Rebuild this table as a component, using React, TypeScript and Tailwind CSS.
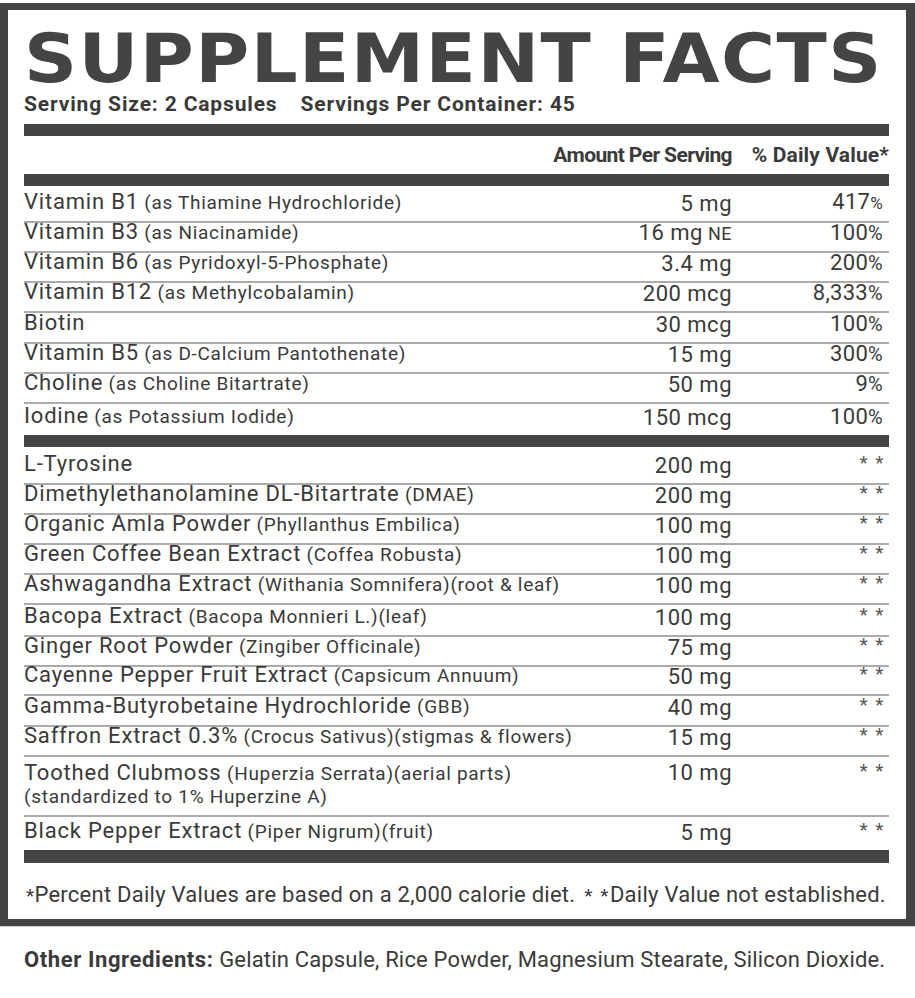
import React from "react";

type Row = {
  name: string;
  sub?: string;
  sub2?: string;
  amt: string;
  amtSuffix?: string;
  dv?: string;
  pctSmall?: boolean;
  h: string;
  shift?: "s1" | "s3" | "s6" | "s10";
  last?: boolean;
};

const vitamins: Row[] = [
  { name: "Vitamin B1", sub: "(as Thiamine Hydrochloride)", amt: "5 mg", dv: "417", pctSmall: true, h: "h-[37px]" },
  { name: "Vitamin B3", sub: "(as Niacinamide)", amt: "16 mg", amtSuffix: "NE", dv: "100", h: "h-[30px]" },
  { name: "Vitamin B6", sub: "(as Pyridoxyl-5-Phosphate)", amt: "3.4 mg", dv: "200", h: "h-[30px]" },
  { name: "Vitamin B12", sub: "(as Methylcobalamin)", amt: "200 mcg", dv: "8,333", h: "h-[30px]" },
  { name: "Biotin", amt: "30 mcg", dv: "100", h: "h-[31px]" },
  { name: "Vitamin B5", sub: "(as D-Calcium Pantothenate)", amt: "15 mg", dv: "300", h: "h-[30px]" },
  { name: "Choline", sub: "(as Choline Bitartrate)", amt: "50 mg", dv: "9", h: "h-[30px]" },
  { name: "Iodine", sub: "(as Potassium Iodide)", amt: "150 mcg", dv: "100", h: "h-[31px]", last: true },
];

const others: Row[] = [
  { name: "L-Tyrosine", amt: "200 mg", h: "h-[38px]" },
  { name: "Dimethylethanolamine DL-Bitartrate", sub: "(DMAE)", amt: "200 mg", h: "h-[30px]" },
  { name: "Organic Amla Powder", sub: "(Phyllanthus Embilica)", amt: "100 mg", h: "h-[30px]" },
  { name: "Green Coffee Bean Extract", sub: "(Coffea Robusta)", amt: "100 mg", h: "h-[30px]" },
  { name: "Ashwagandha Extract", sub: "(Withania Somnifera)(root & leaf)", amt: "100 mg", h: "h-[30px]", shift: "s6" },
  { name: "Bacopa Extract", sub: "(Bacopa Monnieri L.)(leaf)", amt: "100 mg", h: "h-[32px]" },
  { name: "Ginger Root Powder", sub: "(Zingiber Officinale)", amt: "75 mg", h: "h-[30px]", shift: "s6" },
  { name: "Cayenne Pepper Fruit Extract", sub: "(Capsicum Annuum)", amt: "50 mg", h: "h-[29px]", shift: "s10" },
  { name: "Gamma-Butyrobetaine Hydrochloride", sub: "(GBB)", amt: "40 mg", h: "h-[31px]", shift: "s1" },
  { name: "Saffron Extract 0.3%", sub: "(Crocus Sativus)(stigmas & flowers)", amt: "15 mg", h: "h-[30px]", shift: "s10" },
  { name: "Toothed Clubmoss", sub: "(Huperzia Serrata)(aerial parts)", sub2: "(standardized to 1% Huperzine A)", amt: "10 mg", h: "h-[60px]", shift: "s3" },
  { name: "Black Pepper Extract", sub: "(Piper Nigrum)(fruit)", amt: "5 mg", h: "h-[33px]", last: true },
];

const amtShift: Record<string, string> = {
  s1: "mr-[-1px]",
  s3: "mr-[-3px]",
  s6: "mr-[-6px]",
  s10: "mr-[-10px]",
};
const dvShift: Record<string, string> = {
  s1: "ml-[1px]",
  s3: "ml-[3px]",
  s6: "ml-[6px]",
  s10: "ml-[10px]",
};

function Stars() {
  return <span className="relative top-[-3px] text-[19px] tracking-[1.5px] text-[#555]">* *</span>;
}

function IngredientRow({ r }: { r: Row }) {
  const border = r.last ? "" : "border-b-2 border-[#ababab]";
  const aS = r.shift ? amtShift[r.shift] : "";
  const dS = r.shift ? dvShift[r.shift] : "";
  if (r.sub2) {
    return (
      <div className={`flex items-start pt-[5px] ${r.h} ${border}`}>
        <div className="flex-1 leading-[21px] whitespace-nowrap">
          <div>
            <span className="text-[22px] tracking-[0.8px]">{r.name}</span>
            <span className="text-[19px] tracking-[0.7px]"> {r.sub}</span>
          </div>
          <div className="text-[19px] tracking-[0.7px] leading-[16px] mt-[4px]">{r.sub2}</div>
        </div>
        <div className={`shrink-0 text-right text-[22px] leading-[21px] tracking-[0.5px] ${aS}`}>{r.amt}</div>
        <div className={`w-[157px] shrink-0 text-right pr-[4px] text-[22px] leading-[21px] ${dS}`}>
          <Stars />
        </div>
      </div>
    );
  }
  return (
    <div className={`flex items-end pb-[7px] ${r.h} ${border}`}>
      <div className="flex-1 leading-[21px] whitespace-nowrap">
        <span className="text-[22px] tracking-[0.8px]">{r.name}</span>
        {r.sub ? <span className="text-[19px] tracking-[0.7px]"> {r.sub}</span> : null}
      </div>
      <div className={`shrink-0 text-right text-[22px] leading-[21px] tracking-[0.5px] ${aS}`}>
        {r.amt}
        {r.amtSuffix ? <span className="text-[18px] tracking-[0.5px]"> {r.amtSuffix}</span> : null}
      </div>
      <div className={`w-[157px] shrink-0 text-right ${r.dv ? "pr-[6px]" : "pr-[4px]"} text-[22px] leading-[21px] tracking-[0.3px] ${dS}`}>
        {r.dv ? (
          <>
            {r.dv}
            <span className={r.pctSmall ? "text-[17px]" : "text-[20px]"}>%</span>
          </>
        ) : (
          <Stars />
        )}
      </div>
    </div>
  );
}

export default function App() {
  return (
    <div className="w-[915px] min-h-[998px] bg-white pt-[3px] text-[#3a3a3a] font-['Roboto',sans-serif]">
      <div className="border-t-[7px] border-l-[8px] border-r-[9px] border-b-[7px] border-[#444444] pl-[16px] pr-[17px]">
        <div className="mt-[16px] h-[67px]">
          <div className="w-fit origin-left scale-x-[1.1] text-[67px] leading-[67px] font-bold tracking-[1.3px] whitespace-nowrap font-['DejaVu_Sans',sans-serif] text-[#444444]">
            SUPPLEMENT FACTS
          </div>
        </div>
        <div className="mt-[1px] flex text-[21px] leading-[21px] font-bold tracking-[0.85px] whitespace-nowrap">
          <span>Serving Size: 2 Capsules</span>
          <span className="ml-[23px]">Servings Per Container: 45</span>
        </div>
        <div className="mt-[9px] h-[12px] bg-[#444444]" />
        <div className="mt-[9px] flex text-[21px] leading-[21px] font-bold whitespace-nowrap">
          <div className="flex-1" />
          <div className="shrink-0 text-right tracking-[-0.6px]">Amount Per Serving</div>
          <div className="w-[157px] shrink-0 text-right tracking-[0.15px]">% Daily Value*</div>
        </div>
        <div className="mt-[8px] h-[12px] bg-[#444444]" />
        {vitamins.map((r, i) => (
          <IngredientRow key={i} r={r} />
        ))}
        <div className="h-[12px] bg-[#444444]" />
        {others.map((r, i) => (
          <IngredientRow key={i} r={r} />
        ))}
        <div className="h-[13px] bg-[#444444]" />
        <div className="mt-[21px] mb-[13px] text-[22px] leading-[21px] tracking-[0.25px] whitespace-nowrap pl-[2px]">
          <span className="text-[19px]">*</span>Percent Daily Values are based on a 2,000 calorie diet.
          <span className="ml-[9px] text-[19px] tracking-[1.5px]">* *</span>Daily Value not established.
        </div>
      </div>
      <div className="h-px bg-[#d0d0d0]" />
      <div className="mt-[22px] pl-[24px] text-[22px] leading-[21px] tracking-[0.17px] whitespace-nowrap">
        <span className="font-bold tracking-[0.6px]">Other Ingredients:</span> Gelatin Capsule, Rice Powder, Magnesium Stearate, Silicon Dioxide.
      </div>
    </div>
  );
}
